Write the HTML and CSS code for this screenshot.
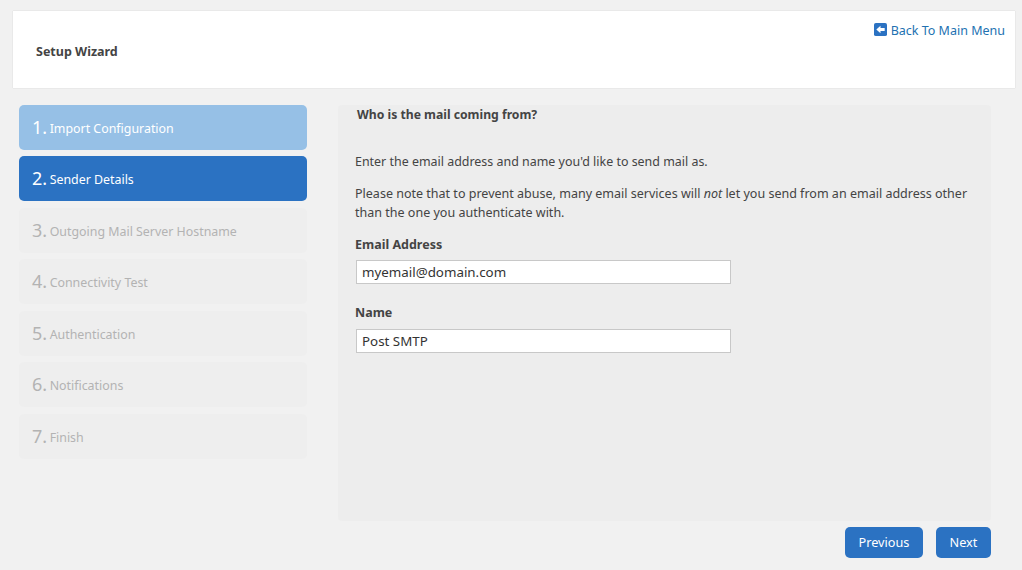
FILE: index.html
```html
<!DOCTYPE html>
<html lang="en">
<head>
  <meta charset="UTF-8" />
  <title>Setup Wizard</title>
  <link rel="stylesheet" href="styles.css">
</head>
<body>
  <header class="top-card">
    <h1 class="top-title">Setup Wizard</h1>
    <a class="back-link" href="#">
      <svg class="back-icon" viewBox="0 0 14 14" width="13" height="13" aria-hidden="true">
        <rect width="14" height="14" rx="2" fill="#2b72c2" />
        <path d="M2.5 7 L7 3 V5.3 H11.5 V8.7 H7 V11 Z" fill="#fff" />
      </svg>
      Back To Main Menu
    </a>
  </header>

  <div class="wizard">
    <ol class="steps">
      <li class="step done"><span class="num">1.</span> Import Configuration</li>
      <li class="step current"><span class="num">2.</span> Sender Details</li>
      <li class="step"><span class="num">3.</span> Outgoing Mail Server Hostname</li>
      <li class="step"><span class="num">4.</span> Connectivity Test</li>
      <li class="step"><span class="num">5.</span> Authentication</li>
      <li class="step"><span class="num">6.</span> Notifications</li>
      <li class="step"><span class="num">7.</span> Finish</li>
    </ol>

    <div class="main">
      <section class="panel">
        <h2 class="panel-title">Who is the mail coming from?</h2>
        <p>Enter the email address and name you'd like to send mail as.</p>
        <p>Please note that to prevent abuse, many email services will <em>not</em> let you send from an email address other than the one you authenticate with.</p>
        <label class="field-label" for="email">Email Address</label>
        <input class="field" id="email" type="text" value="myemail@domain.com">
        <label class="field-label" for="name">Name</label>
        <input class="field" id="name" type="text" value="Post SMTP">
      </section>
      <div class="actions">
        <button class="btn">Previous</button>
        <button class="btn">Next</button>
      </div>
    </div>
  </div>
</body>
</html>
```

FILE: styles.css
```css
body {
  background-color: #f1f1f1;
  color: #444;
  font-family: "Noto Sans", "Open Sans", sans-serif;
  font-size: 13px;
  line-height: 19px;
  margin: 0;
  height: 570px;
  overflow: hidden;
}

.top-card {
  display: flex;
  justify-content: space-between;
  align-items: flex-start;
  box-sizing: border-box;
  width: 1002px;
  height: 77px;
  margin: 11px 0 0 13px;
  padding: 10px 10px 0 23px;
  background: #fff;
  box-shadow: 0 0 1px rgba(0, 0, 0, 0.2);
}

.top-title {
  margin: 21px 0 0;
  font-size: 12.5px;
  line-height: 19px;
  font-weight: 700;
  color: #444;
}

.back-link {
  display: flex;
  align-items: center;
  gap: 4px;
  color: #2271b1;
  font-size: 12.5px;
  text-decoration: none;
}

.back-icon {
  margin-top: -3px;
}

.wizard {
  display: flex;
  align-items: flex-start;
  margin: 16.9px 0 0 19px;
}

.steps {
  list-style: none;
  margin: 0 31px 0 0;
  padding: 0;
  width: 288px;
  flex: none;
}

.step {
  box-sizing: border-box;
  height: 45px;
  margin-bottom: 6.5px;
  padding: 1.8px 0 0 13px;
  display: flex;
  align-items: center;
  gap: 2.5px;
  background: #eeeeee;
  border-radius: 5px;
  color: #b3b3b3;
  font-size: 12.4px;
}

.step .num {
  font-size: 18px;
  position: relative;
  top: -1px;
}

.step.done {
  background: #96c0e6;
  color: #fff;
}

.step.current {
  background: #2b72c2;
  color: #fff;
}

.main {
  width: 653px;
  flex: none;
}

.panel {
  box-sizing: border-box;
  height: 416px;
  padding: 0 17px;
  background: #ededed;
  border-radius: 4px;
}

.panel-title {
  margin: 0 0 0 2px;
  font-size: 12.2px;
  line-height: 19px;
  font-weight: 700;
  color: #444;
}

.panel p {
  margin: 28px 0 0;
  font-size: 12.45px;
  color: #444;
}

.panel p + p {
  margin-top: 13px;
  font-size: 12.53px;
}

.field-label {
  display: block;
  margin-top: 13px;
  font-size: 12.5px;
  font-weight: 700;
  color: #444;
}

.field {
  display: block;
  box-sizing: border-box;
  width: 375px;
  height: 24px;
  margin: 7px 0 0 1px;
  padding: 0 5px;
  background: #fff;
  border: 1px solid #c8c8c8;
  border-radius: 0;
  color: #333;
  font-family: inherit;
  font-size: 13.35px;
}

.field + .field-label {
  margin-top: 19px;
}

#email {
  margin-top: 6px;
}

.actions {
  display: flex;
  justify-content: flex-end;
  gap: 13px;
  margin-top: 6px;
}

.btn {
  height: 31px;
  padding: 0 13.6px;
  background: #2b72c2;
  border: none;
  border-radius: 5px;
  color: #fff;
  font-family: inherit;
  font-size: 12.7px;
}
```
